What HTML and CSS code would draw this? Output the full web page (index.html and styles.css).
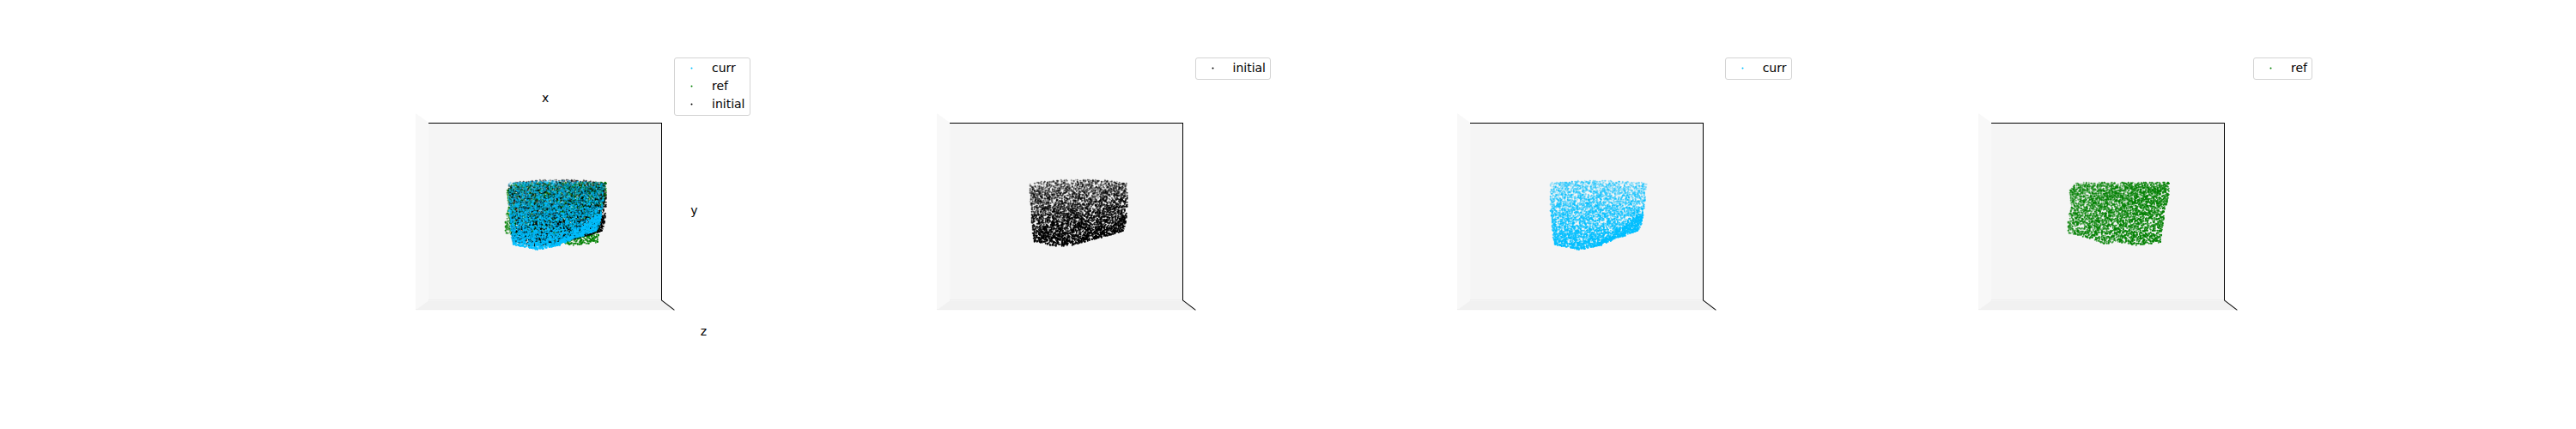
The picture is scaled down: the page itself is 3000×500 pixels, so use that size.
FILE: index.html
```html
<!DOCTYPE html>
<html lang="en">
<head>
<meta charset="utf-8">
<title>Point clouds</title>
<link rel="stylesheet" href="styles.css">
</head>
<body>
<svg class="defs" aria-hidden="true">
  <defs>
    <g id="box">
      <path class="pane-left" d="M109 73L124 84V291L109 302Z"/>
      <path class="pane-floor" d="M109 302L124 291H395L410 302Z"/>
      <path class="pane-back" d="M124 84H395V291H124Z"/>
      <path class="pane-edge" d="M124 290.5H395M109 301.5H410"/>
      <path class="axis" d="M124 84.5H395V290.5"/>
      <path class="axis-z" d="M395 290.5L410 302"/>
    </g>
  </defs>
</svg>
<main class="figure">
  <section class="panel">
    <svg class="plot" viewBox="0 0 505 385" role="img" aria-label="All point clouds">
      <use href="#box"/>
      <g data-cloud="ref"></g>
      <g data-cloud="initial"></g>
      <g data-cloud="curr"></g>
      <text class="label" x="260" y="60">x</text>
      <text class="label" x="433" y="191">y</text>
      <text class="label" x="444" y="332">z</text>
    </svg>
    <ul class="legend">
      <li class="entry"><svg class="marker curr" viewBox="0 0 3 3"><circle cx="1.5" cy="1.5" r="1"/></svg>curr</li>
      <li class="entry"><svg class="marker ref" viewBox="0 0 3 3"><circle cx="1.5" cy="1.5" r="1"/></svg>ref</li>
      <li class="entry"><svg class="marker initial" viewBox="0 0 3 3"><circle cx="1.5" cy="1.5" r="1"/></svg>initial</li>
    </ul>
  </section>
  <section class="panel">
    <svg class="plot" viewBox="0 0 505 385" role="img" aria-label="Initial point cloud">
      <use href="#box"/>
      <g data-cloud="initial"></g>
    </svg>
    <ul class="legend">
      <li class="entry"><svg class="marker initial" viewBox="0 0 3 3"><circle cx="1.5" cy="1.5" r="1"/></svg>initial</li>
    </ul>
  </section>
  <section class="panel">
    <svg class="plot" viewBox="0 0 505 385" role="img" aria-label="Current point cloud">
      <use href="#box"/>
      <g data-cloud="curr"></g>
    </svg>
    <ul class="legend">
      <li class="entry"><svg class="marker curr" viewBox="0 0 3 3"><circle cx="1.5" cy="1.5" r="1"/></svg>curr</li>
    </ul>
  </section>
  <section class="panel">
    <svg class="plot" viewBox="0 0 505 385" role="img" aria-label="Reference point cloud">
      <use href="#box"/>
      <g data-cloud="ref"></g>
    </svg>
    <ul class="legend">
      <li class="entry"><svg class="marker ref" viewBox="0 0 3 3"><circle cx="1.5" cy="1.5" r="1"/></svg>ref</li>
    </ul>
  </section>
</main>
<script src="clouds.js"></script>
</body>
</html>
```
FILE: styles.css
```css
body {
  margin: 0;
  background: #fff;
  color: #000;
  font: 14px/21px "DejaVu Sans", sans-serif;
}

.defs {
  position: absolute;
  width: 0;
  height: 0;
}

.figure {
  display: grid;
  grid-template-columns: repeat(4, 1fr);
  column-gap: 101px;
  padding: 59px 10% 54px 12.5%;
}

.panel {
  position: relative;
}

.plot {
  display: block;
  width: 100%;
  overflow: visible;
}

.pane-left { fill: #f8f8f8; }
.pane-floor { fill: #f1f1f1; }
.pane-back { fill: #f5f5f5; }

.pane-edge {
  fill: none;
  stroke: #eee;
  shape-rendering: crispEdges;
}

.axis {
  fill: none;
  stroke: #000;
  shape-rendering: crispEdges;
}

.axis-z {
  fill: none;
  stroke: #000;
}

.label {
  font-size: 14px;
  text-anchor: middle;
}

.legend {
  position: absolute;
  top: 8px;
  right: 7px;
  margin: 0;
  padding: 1px 5px 2px 18px;
  border: 1px solid #d4d4d4;
  border-radius: 3px;
  background: #fff;
  list-style: none;
}

.entry {
  display: flex;
  align-items: center;
  gap: 22px;
}

.marker {
  width: 3px;
  height: 3px;
}

.curr { fill: #00bfff; }
.ref { fill: #008000; }
.initial { fill: #000; }

.points {
  fill: none;
  stroke-linecap: round;
  stroke-width: 2px;
}

.points-curr { stroke: #00bfff; }
.points-ref { stroke: #008000; }
.points-initial { stroke: #000; }
```
FILE: clouds.js
```js
// Each cloud: outline in plot units, point count, density and opacity by
// position (u, v run 0..1 across and down the outline's bounds).
const clouds = {
  initial: {
    seed: 11,
    count: 4300,
    outline: [[217, 155], [224, 153], [248, 151], [282, 150], [308, 151], [330, 154], [331, 173], [329, 201], [326, 210], [298, 218], [268, 226], [248, 228], [222, 222], [219, 197]],
    density: (u, v) => 0.6 + 0.2 * v + (u + v > 1.5 ? 0.3 : 0),
    alpha: (u, v) => 0.3 + 0.65 * v + 0.1 * u
  },
  curr: {
    seed: 23,
    count: 4500,
    outline: [[217, 154], [239, 152], [279, 151], [330, 154], [327, 180], [324, 198], [321, 209], [299, 217], [272, 228], [249, 232], [222, 226], [218, 197]],
    density: (u, v) => 0.5 + 0.1 * v + (u + v > 1.4 ? 0.5 : 0),
    alpha: (u, v) => 0.3 + 0.55 * v + (u + v > 1.4 ? 0.2 : 0)
  },
  ref: {
    seed: 37,
    count: 4100,
    outline: [[221, 154], [331, 153], [330, 173], [326, 184], [323, 207], [321, 223], [292, 227], [272, 223], [255, 225], [232, 217], [213, 212], [214, 193], [217, 180], [215, 164]],
    density: (u, v) => 0.95 - 0.4 * v,
    alpha: (u, v) => 0.45 + 0.25 * v + 0.2 * u
  }
};

function random(seed) {
  let s = seed;
  return () => {
    s = (s + 0x6d2b79f5) | 0;
    let t = Math.imul(s ^ (s >>> 15), 1 | s);
    t = (t + Math.imul(t ^ (t >>> 7), 61 | t)) ^ t;
    return ((t ^ (t >>> 14)) >>> 0) / 4294967296;
  };
}

function inside(x, y, outline) {
  let hit = false;
  for (let i = 0, j = outline.length - 1; i < outline.length; j = i++) {
    const [ax, ay] = outline[i];
    const [bx, by] = outline[j];
    if ((ay > y) !== (by > y) && x < ((bx - ax) * (y - ay)) / (by - ay) + ax) hit = !hit;
  }
  return hit;
}

function draw(group, name) {
  const { seed, count, outline, density, alpha } = clouds[name];
  const next = random(seed);
  const xs = outline.map(p => p[0]);
  const ys = outline.map(p => p[1]);
  const left = Math.min(...xs), width = Math.max(...xs) - left;
  const top = Math.min(...ys), height = Math.max(...ys) - top;
  const points = [];
  while (points.length < count) {
    const u = next(), v = next();
    const x = left + u * width, y = top + v * height;
    if (!inside(x, y, outline) || next() > density(u, v)) continue;
    const opacity = Math.min(1, Math.max(0.25, alpha(u, v) + (next() - 0.5) * 0.4));
    points.push({ x: Math.floor(x) + 0.5, y: Math.floor(y) + 0.5, opacity });
  }
  points.sort((a, b) => a.opacity - b.opacity);
  for (const { x, y, opacity } of points) {
    const path = document.createElementNS("http://www.w3.org/2000/svg", "path");
    path.setAttribute("class", "points points-" + name);
    path.setAttribute("d", `M${x} ${y}h0`);
    path.setAttribute("opacity", opacity.toFixed(2));
    group.append(path);
  }
}

document.querySelectorAll("[data-cloud]").forEach(g => draw(g, g.dataset.cloud));
```
